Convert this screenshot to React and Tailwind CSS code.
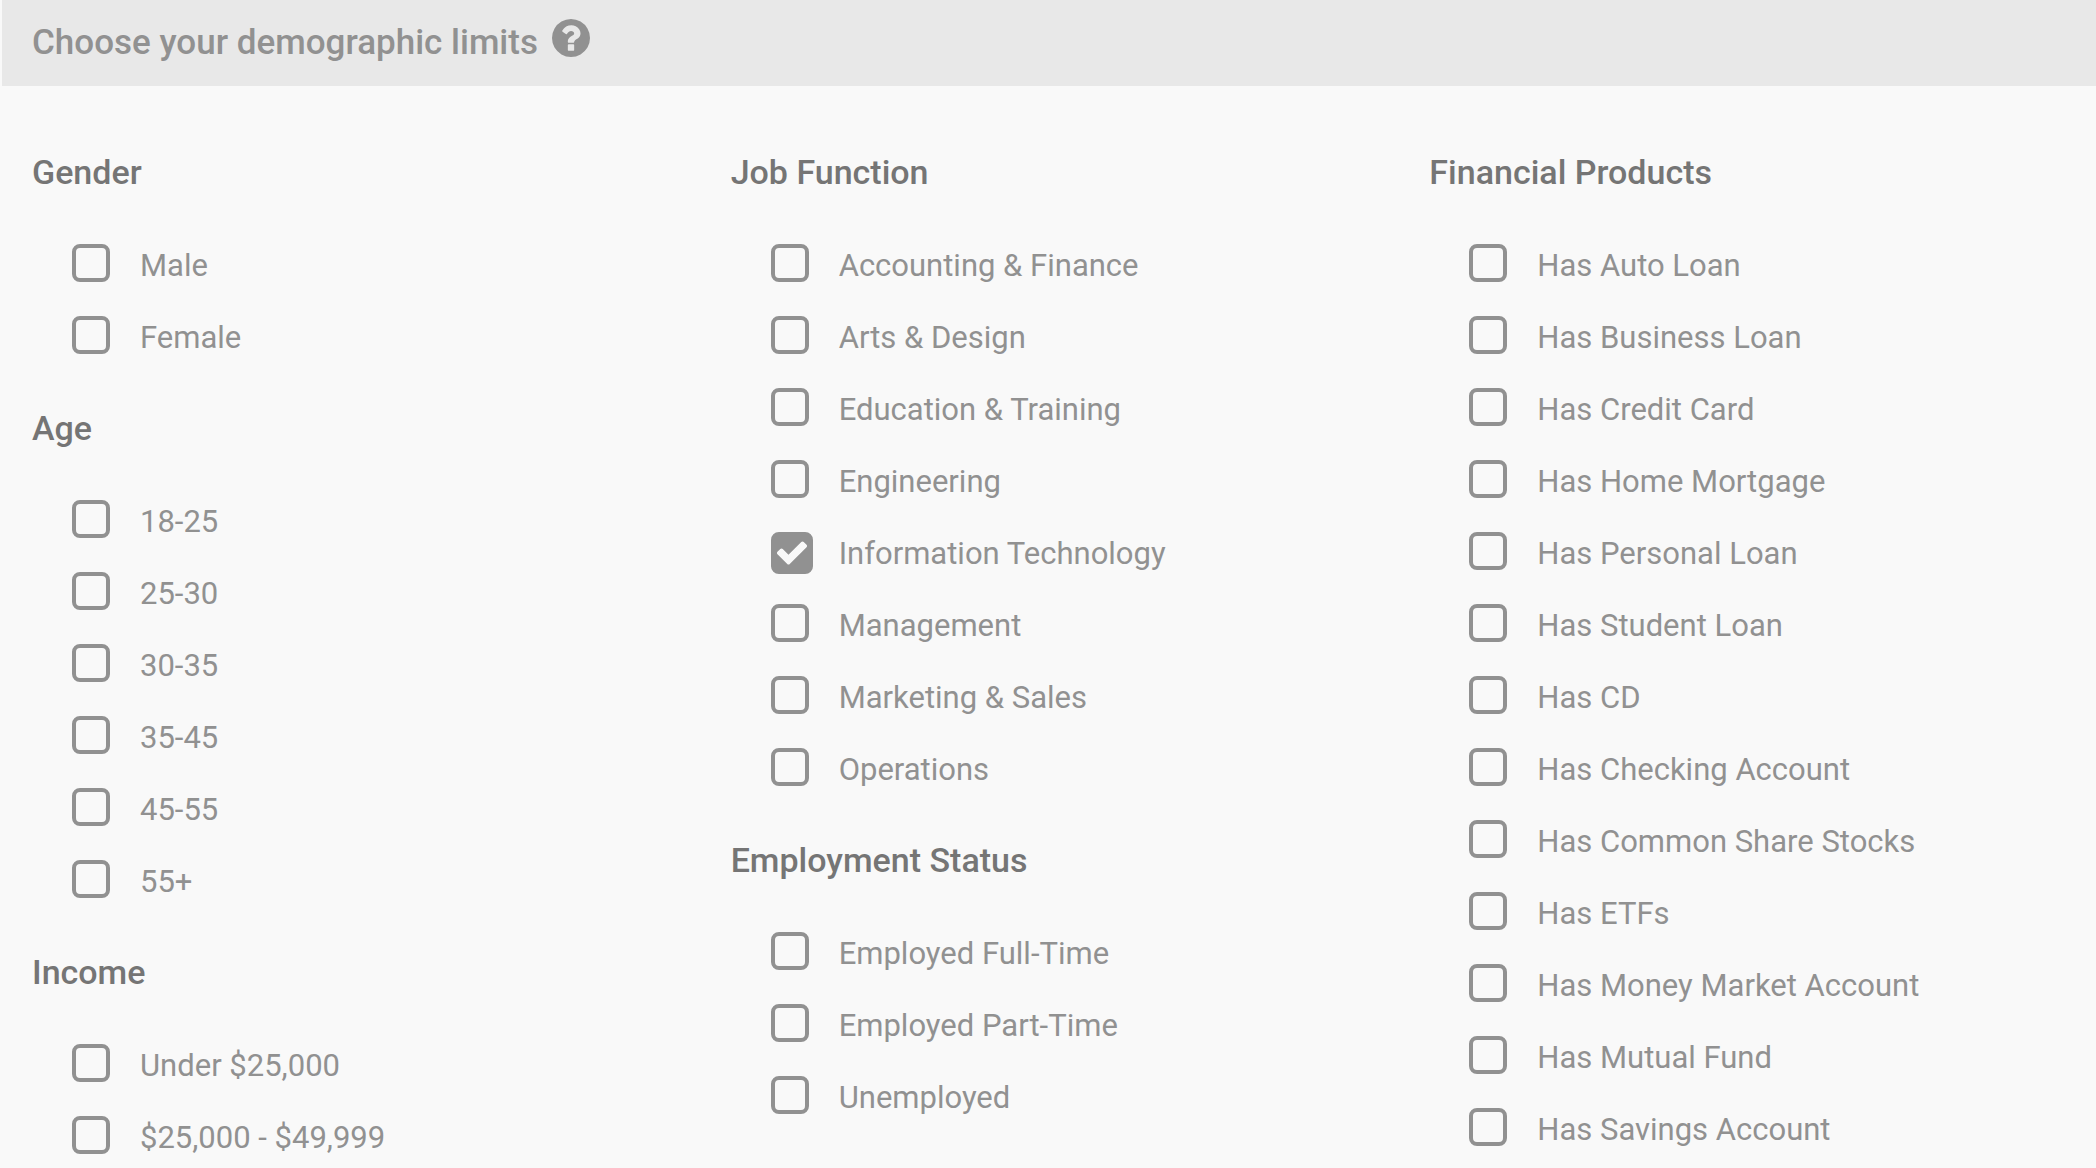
import React, { useState } from 'react';

const columns = [
  [
    { title: 'Gender', options: ['Male', 'Female'] },
    { title: 'Age', options: ['18-25', '25-30', '30-35', '35-45', '45-55', '55+'] },
    { title: 'Income', options: ['Under $25,000', '$25,000 - $49,999'] },
  ],
  [
    {
      title: 'Job Function',
      options: [
        'Accounting & Finance',
        'Arts & Design',
        'Education & Training',
        'Engineering',
        'Information Technology',
        'Management',
        'Marketing & Sales',
        'Operations',
      ],
    },
    {
      title: 'Employment Status',
      options: ['Employed Full-Time', 'Employed Part-Time', 'Unemployed'],
    },
  ],
  [
    {
      title: 'Financial Products',
      options: [
        'Has Auto Loan',
        'Has Business Loan',
        'Has Credit Card',
        'Has Home Mortgage',
        'Has Personal Loan',
        'Has Student Loan',
        'Has CD',
        'Has Checking Account',
        'Has Common Share Stocks',
        'Has ETFs',
        'Has Money Market Account',
        'Has Mutual Fund',
        'Has Savings Account',
      ],
    },
  ],
];

const HelpIcon = () => (
  <svg viewBox="128 128 1536 1536" className="size-[38px]" fill="currentColor" aria-hidden="true">
    <path d="M1024 1376v-192q0-14-9-23t-23-9h-192q-14 0-23 9t-9 23v192q0 14 9 23t23 9h192q14 0 23-9t9-23zm256-672q0-88-55.5-163t-138.5-116-170-41q-243 0-371 213-15 24 8 42l132 100q7 6 19 6 16 0 25-12 53-68 86-92 34-24 86-24 48 0 85.5 26t37.5 59q0 38-20 61t-68 45q-63 28-115.5 86.5t-52.5 125.5v36q0 14 9 23t23 9h192q14 0 23-9t9-23q0-19 21.5-49.5t54.5-49.5q32-18 49-28.5t46-35 44.5-48 28-60.5 12.5-81zm384 192q0 209-103 385.5t-279.5 279.5-385.5 103-385.5-103-279.5-279.5-103-385.5 103-385.5 279.5-279.5 385.5-103 385.5 103 279.5 279.5 103 385.5z" />
  </svg>
);

const CheckIcon = () => (
  <svg
    viewBox="128 128 1536 1536"
    className="hidden peer-checked:block col-start-1 row-start-1 size-[42px] pointer-events-none"
    fill="currentColor"
    aria-hidden="true"
  >
    <path d="M813 1299l614-614q19-19 19-45t-19-45l-102-102q-19-19-45-19t-45 19l-467 467-211-211q-19-19-45-19t-45 19l-102 102q-19 19-19 45t19 45l358 358q19 19 45 19t45-19zm851-883v960q0 119-84.5 203.5t-203.5 84.5h-960q-119 0-203.5-84.5t-84.5-203.5v-960q0-119 84.5-203.5t203.5-84.5h960q119 0 203.5 84.5t84.5 203.5z" />
  </svg>
);

const Option = ({ label, checked, onToggle }) => (
  <label className="flex h-11 cursor-pointer text-[#919191]">
    <span className="grid w-[68px] shrink-0 content-start justify-items-start">
      <input
        type="checkbox"
        checked={checked}
        onChange={onToggle}
        className="peer col-start-1 row-start-1 size-[38px] appearance-none rounded-lg border-4 border-[#919191] checked:border-transparent"
      />
      <CheckIcon />
    </span>
    <span className="text-[31px] leading-11 whitespace-nowrap">{label}</span>
  </label>
);

const App = () => {
  const [selected, setSelected] = useState(['Information Technology']);

  const toggle = (option) => {
    setSelected(
      selected.includes(option) ? selected.filter((o) => o !== option) : [...selected, option]
    );
  };

  return (
    <div className="min-h-screen bg-[#f9f9f9] font-[Roboto,sans-serif]">
      <header className="ml-0.5 flex h-[86px] items-center gap-3.5 bg-[#e8e8e8] pl-[30px] text-[#919191]">
        <h1 className="text-[35px] leading-10 font-medium">Choose your demographic limits</h1>
        <button type="button" aria-label="Help" className="mb-2.5">
          <HelpIcon />
        </button>
      </header>
      <main className="grid grid-cols-3 pt-[66px]">
        {columns.map((sections, i) => (
          <div key={i} className="flex flex-col gap-12 pl-8">
            {sections.map((section) => (
              <fieldset key={section.title}>
                <legend className="text-[34px] leading-10 font-medium text-[#757575]">
                  {section.title}
                </legend>
                <div className="mt-[52px] flex flex-col gap-7 pl-10">
                  {section.options.map((option) => (
                    <Option
                      key={option}
                      label={option}
                      checked={selected.includes(option)}
                      onToggle={() => toggle(option)}
                    />
                  ))}
                </div>
              </fieldset>
            ))}
          </div>
        ))}
      </main>
    </div>
  );
};

export default App;
